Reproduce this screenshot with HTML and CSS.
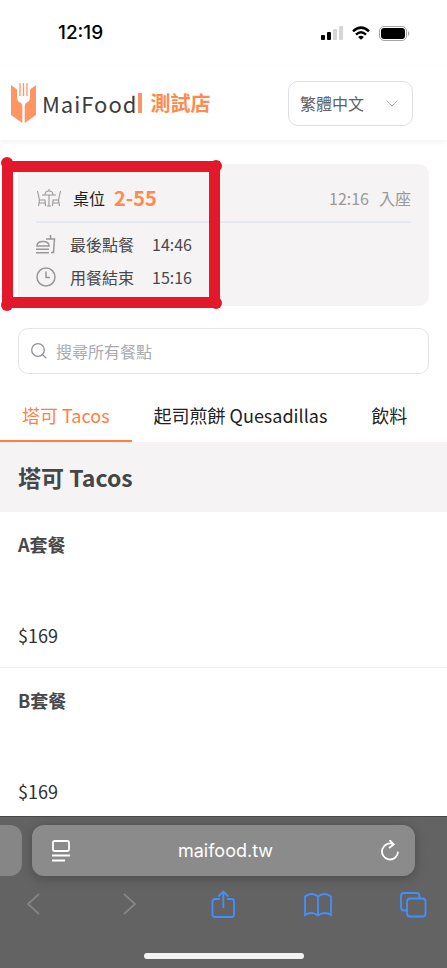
FILE: index.html
```html
<!DOCTYPE html>
<html lang="zh-Hant">
<head>
<meta charset="utf-8">
<meta name="viewport" content="width=device-width, initial-scale=1">
<title>MaiFood</title>
<link rel="stylesheet" href="styles.css">
</head>
<body>
<div class="status">
  <time class="clock">12:19</time>
  <div class="status-icons">
    <svg width="22" height="14" viewBox="0 0 22 14" aria-hidden="true">
      <rect x="0" y="9" width="4" height="5" rx="1"/>
      <rect x="6" y="6" width="4" height="8" rx="1"/>
      <rect x="12" y="3" width="4" height="11" rx="1" fill="#d6d6d6"/>
      <rect x="18" y="0" width="4" height="14" rx="1" fill="#d6d6d6"/>
    </svg>
    <svg width="18" height="14" viewBox="0 0 18 14" aria-hidden="true">
      <g fill="none" stroke="#000" stroke-width="2.5">
        <path d="M1 5.3Q9-2 17 5.3"/>
        <path d="M4 8.6Q9 4 14 8.6"/>
      </g>
      <path d="M9 13.8L6.1 10.9Q9 8.4 11.9 10.9Z"/>
    </svg>
    <svg width="31" height="15" viewBox="0 0 31 15" aria-hidden="true">
      <rect x=".5" y=".5" width="27" height="14" rx="4.5" fill="none" stroke="#a3a3a3"/>
      <rect x="2" y="2" width="24" height="11" rx="3.2"/>
      <path d="M29 5q3 2.500 0 5z" fill="#a9a9a9"/>
    </svg>
  </div>
</div>

<header class="header">
  <a class="brand" href="#">
    <svg width="26" height="40" viewBox="0 0 26 40" aria-hidden="true">
      <path d="M0 2L6 6.500V14Q6 18.500 9.500 19.500Q11.300 20.500 11.300 23V40L0 32Z" fill="#ff9563"/>
      <path d="M25 2L19 6.500V14Q19 18.500 15.500 19.500Q13.700 20.500 13.700 23V40L25 32Z" fill="#ff9563"/>
      <path d="M9 0V13M12.500 0V13M16 0V13" stroke="#ff9563" stroke-width="1.300" fill="none"/>
    </svg>
    <span class="wordmark">MaiFood</span>
    <span class="bar"></span>
    <span class="store">測試店</span>
  </a>
  <div class="language">
    <select aria-label="語言"><option>繁體中文</option></select>
    <svg class="chevron" width="12" height="7" viewBox="0 0 12 7" aria-hidden="true"><path d="M.5.5L6 6L11.500.5"/></svg>
  </div>
</header>

<main class="content">
  <section class="visit">
    <div class="visit-top">
      <svg class="line-icon thin" width="26" height="18" viewBox="0 0 26 18" aria-hidden="true">
        <path d="M1.500 2L3.500 11M2.500 17L3.500 11H9L9.500 17M3 14H9M24.500 2L22.500 11M23.500 17L22.500 11H17L16.500 17M17 14H23M6 6H20M9 6Q9 2 13 2T17 6M13 0V2M13 6V17M11 17H15"/>
      </svg>
      <span class="label">桌位</span>
      <strong class="table-no">2-55</strong>
      <span class="seated"><time>12:16</time><span>入座</span></span>
    </div>
    <div class="visit-row">
      <svg class="line-icon" width="20" height="20" viewBox="0 0 20 20" aria-hidden="true">
        <path d="M1 12Q1 7.500 7 7.500T13 12ZM0 15.300H13M0 18.700H13M10 5H18.500L17.500 18.500H15M14.500 5V1"/>
      </svg>
      <span class="label">最後點餐</span><time>14:46</time>
    </div>
    <div class="visit-row">
      <svg class="line-icon" width="20" height="20" viewBox="0 0 20 20" aria-hidden="true">
        <circle cx="10" cy="10" r="9"/><path d="M10 4.500V10.500H14"/>
      </svg>
      <span class="label">用餐結束</span><time>15:16</time>
    </div>
    <svg class="marker" width="224" height="154" viewBox="0 0 224 154" aria-hidden="true">
      <path d="M7.500 9.500H214.500V145.500H7.500Z" fill="none" stroke="#e3192b" stroke-width="11"/>
      <g fill="#e3192b"><circle cx="7" cy="6" r="6"/><circle cx="216" cy="9" r="6"/><circle cx="7" cy="148" r="6"/><circle cx="216" cy="146" r="6"/></g>
    </svg>
  </section>

  <label class="search">
    <svg width="16" height="16" viewBox="0 0 16 16" aria-hidden="true"><circle cx="7" cy="7" r="6.300"/><path d="M11.600 11.600L15.300 15.300"/></svg>
    <input type="search" placeholder="搜尋所有餐點" aria-label="搜尋所有餐點">
  </label>

  <nav class="tabs">
    <a class="tab active" href="#tacos">塔可 Tacos</a>
    <a class="tab" href="#quesadillas">起司煎餅 Quesadillas</a>
    <a class="tab" href="#drinks">飲料</a>
  </nav>

  <section id="tacos">
    <h2 class="category">塔可 Tacos</h2>
    <article class="item"><h3>A套餐</h3><p>$169</p></article>
    <article class="item"><h3>B套餐</h3><p>$169</p></article>
  </section>
</main>

<footer class="browser">
  <div class="address-row">
    <div class="prev-page"></div>
    <div class="address">
      <button aria-label="Page menu"><svg width="18" height="22" viewBox="0 0 18 22"><rect x="1" y="1" width="16" height="10" rx="1.500"/><path d="M0 15.500H18M0 20.500H13"/></svg></button>
      <span>maifood.tw</span>
      <button aria-label="Reload"><svg width="18" height="22" viewBox="0 0 18 22"><path d="M12.500 4.300A8 8 0 1 0 17 11.800M8.500 0L12.700 4.300L8 8"/></svg></button>
    </div>
  </div>
  <div class="tools">
    <button class="off" aria-label="Back"><svg width="28" height="28" viewBox="0 0 28 28"><path d="M19 4L8 14L19 24"/></svg></button>
    <button class="off" aria-label="Forward"><svg width="28" height="28" viewBox="0 0 28 28"><path d="M9 4L20 14L9 24"/></svg></button>
    <button aria-label="Share"><svg width="28" height="28" viewBox="0 0 28 28"><path d="M10 9H5Q2.500 9 2.500 11.500V24.500Q2.500 27 5 27H21.500Q24 27 24 24.500V11.500Q24 9 21.500 9H17M13.300 18V1.500M8.300 6.500L13.300 1.500L18.300 6.500"/></svg></button>
    <button aria-label="Bookmarks"><svg width="28" height="28" viewBox="0 0 28 28"><path d="M14 6.500Q11 4 7.500 4T1 6.500V25Q4 23 7.500 23T14 25.500Q17 23 20.500 23T27 25V6.500Q24 4 20.500 4T14 6.500V25.500"/></svg></button>
    <button aria-label="Tabs"><svg width="28" height="28" viewBox="0 0 28 28"><rect x="8" y="8.500" width="18.500" height="18" rx="3"/><path d="M8 20.500H5Q2 20.500 2 17.500V6Q2 3 5 3H17.500Q20.500 3 20.500 6V8.500"/></svg></button>
  </div>
  <div class="home-bar"></div>
</footer>
</body>
</html>
```
FILE: styles.css
```css
* { box-sizing: border-box; margin: 0; }
body {
  height: 100vh;
  display: flex;
  flex-direction: column;
  background: #fff;
  color: #303133;
  font: 16px/24px "Noto Sans CJK TC", sans-serif;
}
a { color: inherit; text-decoration: none; }
button { border: 0; padding: 0; background: none; color: inherit; display: flex; }
svg { display: block; flex: none; }

.status {
  flex: none;
  height: 66px;
  padding: 0 37px 0 58px;
  display: flex;
  align-items: center;
  justify-content: space-between;
}
.clock { font: 500 19px/24px Inter, sans-serif; color: #000; }
.status-icons { display: flex; align-items: center; gap: 9px; }

.header {
  flex: none;
  height: 74px;
  padding: 0 34px 0 11px;
  display: flex;
  align-items: center;
  justify-content: space-between;
  box-shadow: 0 2px 5px rgba(0, 0, 0, .06);
}
.brand { display: flex; align-items: center; }
.wordmark { margin-left: 5px; font-size: 22px; letter-spacing: 1px; color: #3c3c3f; }
.bar { width: 4px; height: 20px; margin: 0 8px 0 1px; background: #ff9563; }
.store { font-size: 20px; font-weight: 700; color: #ff8a50; }
.language { position: relative; }
.language select {
  appearance: none;
  width: 125px;
  height: 45px;
  padding: 0 11px;
  border: 1px solid #dcdfe9;
  border-radius: 10px;
  background: #fff;
  color: #606266;
  font: inherit;
}
.chevron {
  position: absolute;
  right: 15px;
  top: 19px;
  fill: none;
  stroke: #b4b7bf;
  pointer-events: none;
}

.content { flex: 1; min-height: 0; overflow-y: auto; scrollbar-width: none; padding-top: 24px; }
.visit {
  position: relative;
  margin: 0 18px;
  padding: 10px 18px 13px;
  border-radius: 10px;
  background: #f5f3f4;
}
.visit-top {
  display: flex;
  align-items: center;
  height: 49px;
  margin-bottom: 4px;
  border-bottom: 2px solid #e6e8f0;
}
.visit-top .label { margin: 0 9px 0 11px; color: #1f1f1f; }
.table-no { font-size: 20px; color: #ff8a50; }
.seated { margin-left: auto; display: flex; gap: 10px; color: #999; }
.visit-row { display: flex; align-items: center; height: 33px; color: #48484a; }
.visit-row .label { margin: 0 18px 0 14px; }
.line-icon { fill: none; stroke: #999; stroke-width: 1.5; }
.line-icon.thin { stroke-width: 1.1; }
.marker { position: absolute; left: -18px; top: -7px; pointer-events: none; }

.search {
  display: flex;
  align-items: center;
  height: 46px;
  margin: 22px 18px 0;
  padding: 0 12px;
  border: 1px solid #e2e4ed;
  border-radius: 10px;
}
.search svg { fill: none; stroke: #8e9095; stroke-width: 1.3; }
.search input {
  flex: 1;
  min-width: 0;
  padding: 0;
  margin-left: 9px;
  border: 0;
  outline: 0;
  background: none;
  font: inherit;
}
.search input::placeholder { color: #a8abb2; }

.tabs { display: flex; height: 68px; padding-top: 16px; overflow: hidden; font-size: 18px; color: #222; }
.tab { flex: none; padding: 0 22px; line-height: 50px; border-bottom: 2px solid transparent; }
.tab.active { color: #ff7f42; border-color: #ff7f42; }

.category {
  padding: 20px 18px;
  background: #f5f3f4;
  color: #444648;
  font-size: 23px;
  line-height: 30px;
}
.item {
  min-height: 156px;
  padding: 20px 18px;
  display: flex;
  flex-direction: column;
  justify-content: space-between;
  border-bottom: 1px solid #f0f0f0;
  font-size: 18px;
}
.item h3 { font-size: 18px; font-weight: 700; color: #48484a; }

.browser {
  flex: none;
  padding-top: 8px;
  background: #636363;
  border-top: 1px solid #484848;
  color: #fff;
}
.browser svg { fill: none; stroke: currentColor; stroke-width: 1.8; }
.address-row { display: flex; gap: 10px; padding-right: 32px; }
.prev-page { width: 22px; border-radius: 0 12px 12px 0; background: #868686; }
.address {
  flex: 1;
  display: flex;
  align-items: center;
  justify-content: space-between;
  height: 51px;
  padding: 0 16px 0 20px;
  border-radius: 12px;
  background: #8b8b8b;
  box-shadow: 0 2px 12px rgba(0, 0, 0, .25);
  font: 18px/24px Inter, sans-serif;
}
.tools { display: flex; justify-content: space-between; padding: 14px 20px 0; color: #438fff; }
.tools .off { color: #858585; }
.home-bar { width: 160px; height: 6px; margin: 35px auto 9px; border-radius: 3px; background: #f3f3f3; }
```
